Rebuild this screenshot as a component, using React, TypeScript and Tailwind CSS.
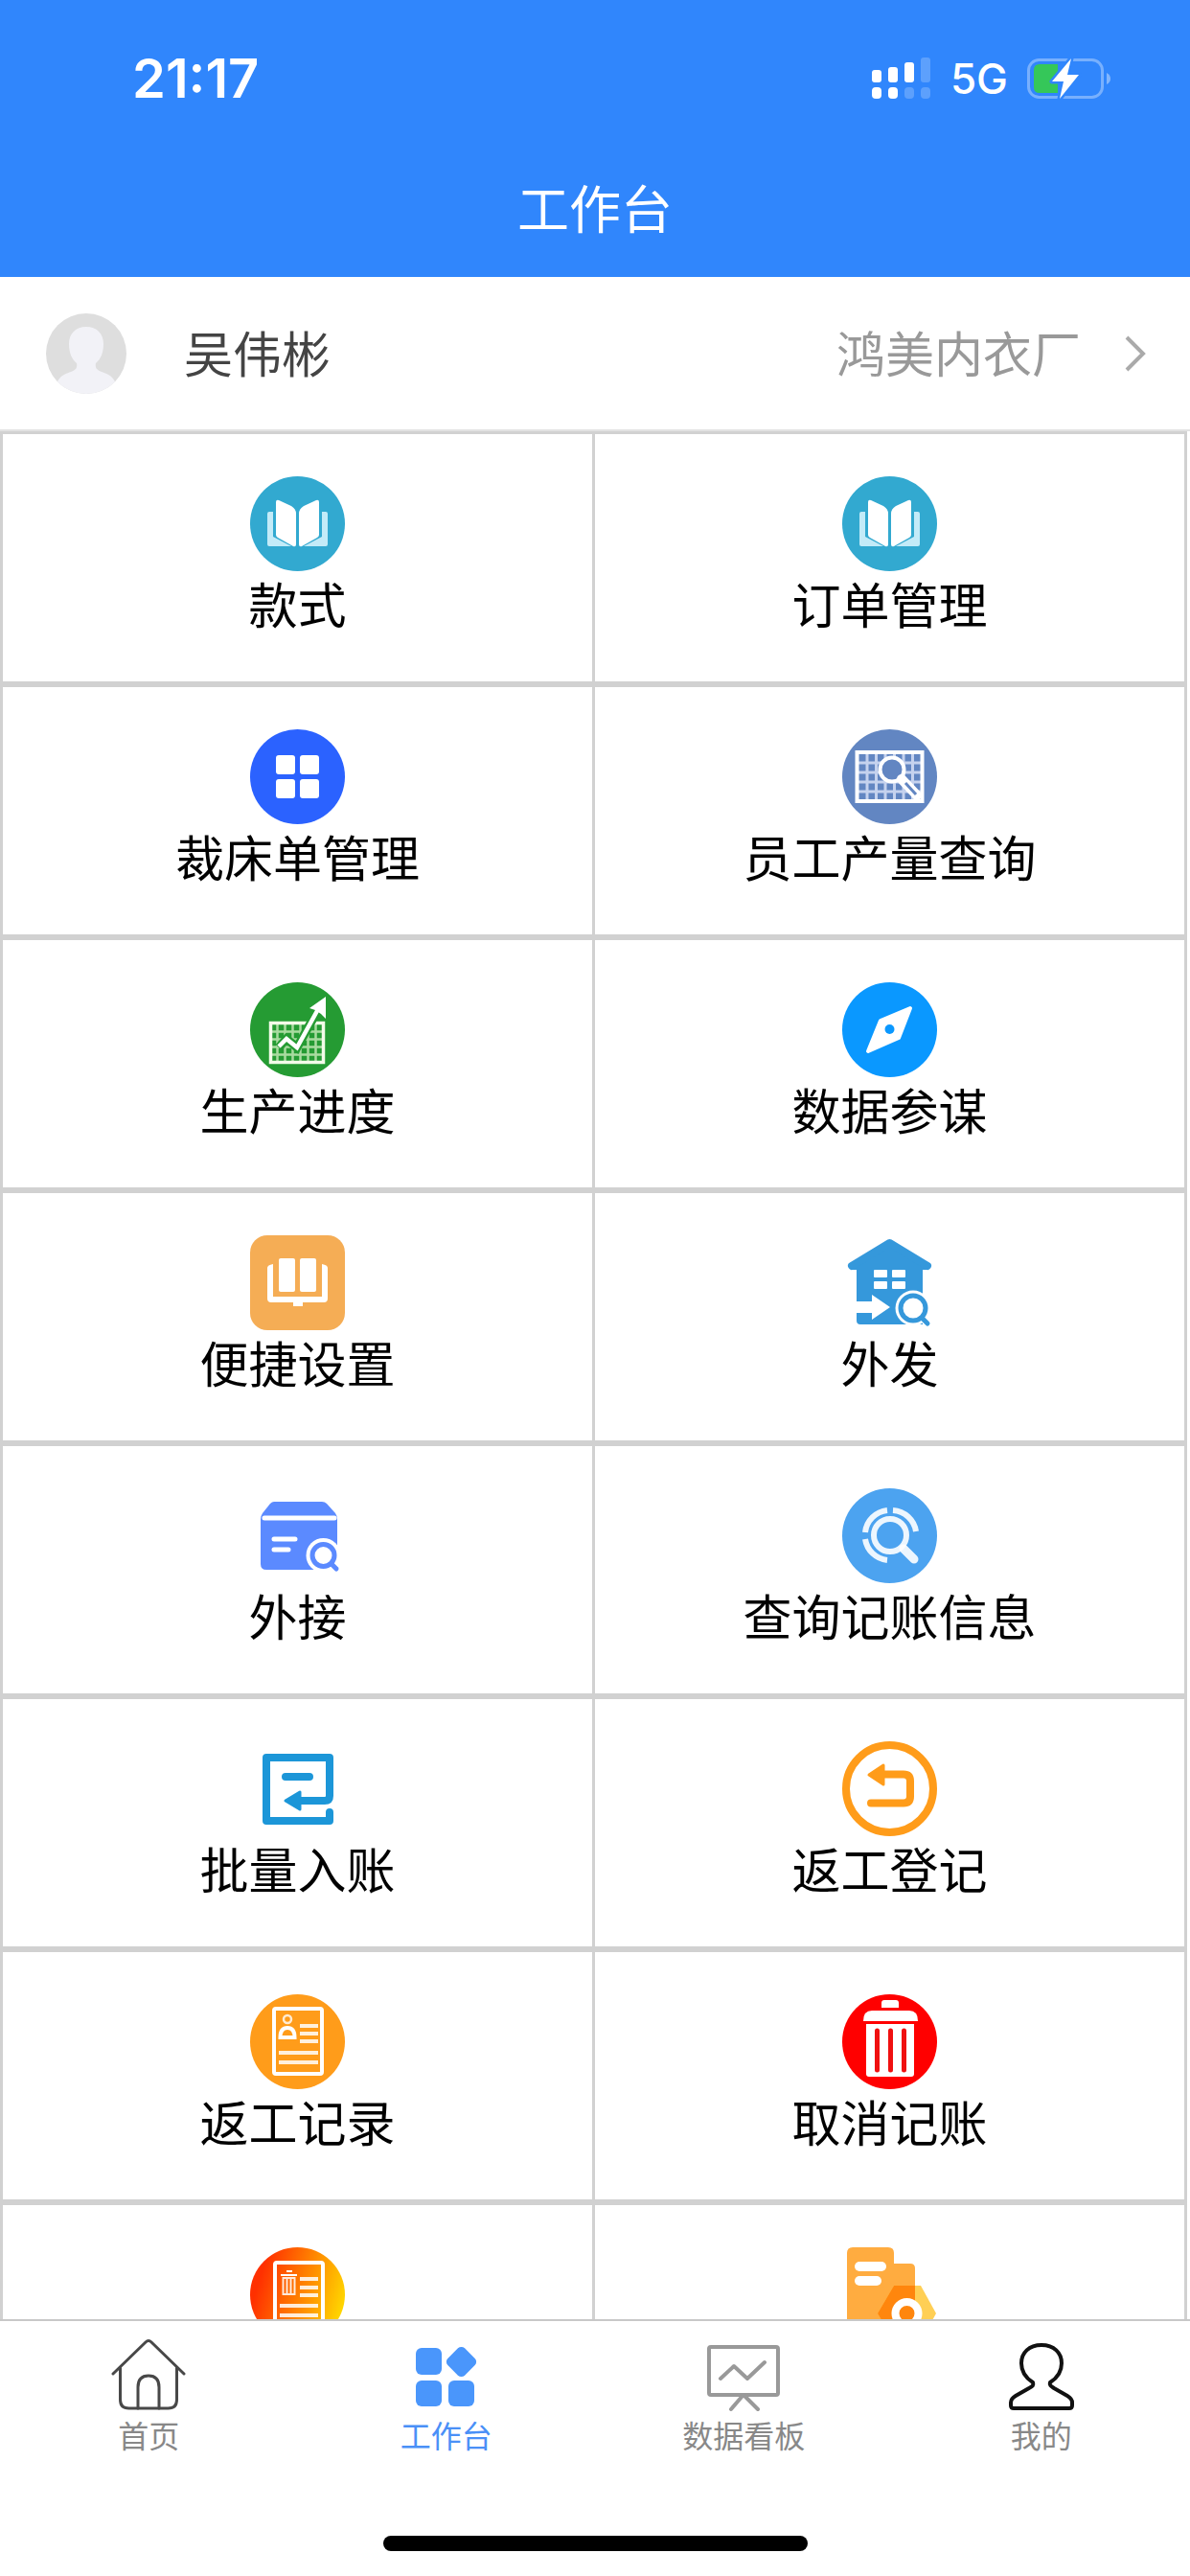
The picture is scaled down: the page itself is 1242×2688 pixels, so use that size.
import { useState, type ReactNode } from 'react'

type MenuItem = {
  name: string
  icon: ReactNode
  hideLabel?: boolean
}

const BookIcon = () => (
  <>
    <circle cx="49.5" cy="49.5" r="49.5" fill="#32a9d0" />
    <path d="M18 39q0-2 2-2h4v26l19 10H20q-2 0-2-2z" fill="#c3ebf8" />
    <path d="M81 39q0-2-2-2h-4v26L56 73h23q2 0 2-2z" fill="#c3ebf8" />
    <path d="M27 27q0-3 3-2l13 6q5 3 5 8v32q0 3-3 2L29 64q-2-1-2-3z" fill="#fff" />
    <path d="M72 27q0-3-3-2l-13 6q-5 3-5 8v32q0 3 3 2l16-9q2-1 2-3z" fill="#fff" />
  </>
)

const BlocksIcon = () => (
  <>
    <circle cx="49.5" cy="49.5" r="49.5" fill="#2b62ff" />
    <g fill="#fff">
      <rect x="27" y="27" width="20" height="20" rx="3" />
      <rect x="52" y="27" width="20" height="20" rx="3" />
      <rect x="27" y="52" width="20" height="20" rx="3" />
      <rect x="52" y="52" width="20" height="20" rx="3" />
    </g>
  </>
)

const OutputSearchIcon = () => (
  <>
    <circle cx="49.5" cy="49.5" r="49.5" fill="#6286c2" />
    <g stroke="#c5d2ee" strokeWidth="3">
      <path d="M26 24v50M35.5 24v50M45 24v50M54.5 24v50M64 24v50M73.5 24v50" />
      <path d="M15 35h68M15 45h68M15 55h68M15 65h68" />
    </g>
    <rect x="15.5" y="24" width="68" height="51" fill="none" stroke="#fff" strokeWidth="4" />
    <circle cx="52" cy="42" r="12.5" fill="#6286c2" stroke="#fff" strokeWidth="4" />
    <path d="M62 52l16 17" stroke="#fff" strokeWidth="10" strokeLinecap="round" />
    <path d="M66 56l11 12" stroke="#6286c2" strokeWidth="3" />
  </>
)

const ProgressIcon = () => (
  <>
    <circle cx="49.5" cy="49.5" r="49.5" fill="#259b33" />
    <g stroke="#a9dba0" strokeWidth="2.5">
      <path d="M28.5 43v40M36.5 43v40M44.5 43v40M52.5 43v40M60.5 43v40M68.5 43v40" />
      <path d="M22 51.5h54M22 59.5h54M22 67.5h54M22 75.5h54" />
    </g>
    <rect x="21.5" y="42.5" width="55" height="41" fill="none" stroke="#f3fbe9" strokeWidth="3.5" />
    <path d="M30 68l8-9 11 9 20-36" fill="none" stroke="#259b33" strokeWidth="9" />
    <path d="M30 67l8-8 11 9 22-40" fill="none" stroke="#fff" strokeWidth="4.5" />
    <path d="M79 15L62 27l6 2 6 4 5 5z" fill="#fff" />
  </>
)

const CompassIcon = () => (
  <>
    <circle cx="49.5" cy="49.5" r="49.5" fill="#0a98ff" />
    <path d="M71 27L40 40 27 72l32-14z" fill="#fff" stroke="#fff" strokeWidth="4" strokeLinejoin="round" />
    <circle cx="49.5" cy="49" r="5" fill="#0a98ff" />
  </>
)

const SettingBookIcon = () => (
  <>
    <rect width="99" height="99" rx="18" fill="#f5ad55" />
    <g fill="#fff">
      <rect x="30" y="24" width="17" height="35" rx="2" />
      <rect x="52" y="24" width="17" height="35" rx="2" />
      <path d="M18 34q0-3 6-4v34h51V30q6 1 6 4v32q0 4-4 4H55v4H45v-4H22q-4 0-4-4z" />
    </g>
  </>
)

const HouseIcon = () => (
  <>
    <path d="M49.5 8L9 36h6v53q0 4 4 4h65V36h6z" fill="#3598db" />
    <path d="M10 32L49.5 8 89 32" fill="none" stroke="#3598db" strokeWidth="8" strokeLinecap="round" strokeLinejoin="round" />
    <g fill="#fff">
      <rect x="33" y="36" width="14" height="8" rx="1" />
      <rect x="52" y="36" width="14" height="8" rx="1" />
      <rect x="33" y="48" width="14" height="8" rx="1" />
      <rect x="52" y="48" width="14" height="8" rx="1" />
      <path d="M14 69h17v-7l19 13-19 13v-7H14z" />
      <path d="M74 76l14 22h14V76z" />
      <circle cx="74" cy="76" r="18.5" />
    </g>
    <circle cx="74" cy="76" r="13" fill="none" stroke="#3598db" strokeWidth="5" />
    <path d="M83 86l6 6" stroke="#3598db" strokeWidth="5" strokeLinecap="round" />
  </>
)

const BoxSearchIcon = () => (
  <>
    <path d="M25 14h50q3 0 5 2l9 10q2 3 2 6v53H17q-6 0-6-6V32q0-3 2-6l8-10q2-2 4-2z" fill="#5b8aff" />
    <path d="M15 31h73M25 53h22M25 64h15" stroke="#fff" strokeLinecap="round" strokeWidth="5" />
    <path d="M76 70l12 20h12V70z" fill="#fff" />
    <circle cx="76.5" cy="70" r="18" fill="#fff" />
    <circle cx="76.5" cy="70" r="11.5" fill="none" stroke="#5b8aff" strokeWidth="5" />
    <path d="M85 79l5 5" stroke="#5b8aff" strokeWidth="5" strokeLinecap="round" />
  </>
)

const QueryIcon = () => (
  <>
    <circle cx="49.5" cy="49.5" r="49.5" fill="#4ca3f0" />
    <g fill="none" stroke="#fff" strokeOpacity=".9">
      <circle cx="50" cy="49" r="17" strokeWidth="6" />
      <path d="M53 23a26 26 0 0 1 24 22M24 46a26 26 0 0 1 23-23M24 53a26 26 0 0 0 23 22" strokeWidth="6" />
      <path d="M64 63l11 11" strokeWidth="9" strokeLinecap="round" />
    </g>
  </>
)

const BatchIcon = () => (
  <>
    <path
      d="M83 74v9H17V17h66v40q0 5-5 5H50M37 37h25"
      fill="none"
      stroke="#1c96d8"
      strokeWidth="8"
      strokeLinecap="round"
      strokeLinejoin="round"
    />
    <path d="M37 62l15-9v18z" fill="#1c96d8" stroke="#1c96d8" strokeWidth="3" strokeLinejoin="round" />
  </>
)

const ReturnIcon = () => (
  <>
    <circle cx="49.5" cy="49.5" r="45.5" fill="none" stroke="#ff9c1a" strokeWidth="8" />
    <path d="M42 34.5h22q7 0 7 7v16q0 7-7 7H30" fill="none" stroke="#ff9c1a" strokeWidth="8" strokeLinecap="round" />
    <path d="M28 35l15-10v20z" fill="#ff9c1a" stroke="#ff9c1a" strokeWidth="3" strokeLinejoin="round" />
  </>
)

const RecordIcon = () => (
  <>
    <circle cx="49.5" cy="49.5" r="49.5" fill="#ff9c1a" />
    <g fill="none" stroke="#fff">
      <rect x="25" y="15" width="50" height="68" rx="2" strokeWidth="4" />
      <circle cx="39" cy="26" r="4" strokeWidth="2.5" strokeOpacity=".8" />
      <path d="M31.5 45q0-10 7.5-10t7.5 10z" strokeWidth="4" />
      <path d="M52 33h19M52 41h19M52 49h19M30 61h41M30 71h41" strokeWidth="4" strokeOpacity=".85" />
    </g>
  </>
)

const TrashIcon = () => (
  <>
    <circle cx="49.5" cy="49.5" r="49.5" fill="#f00" />
    <g fill="#fff">
      <path d="M41 14V9q0-3 3-3h12q3 0 3 3v5z" />
      <path d="M22 28q0-11 9-11h39q9 0 9 11z" />
      <path d="M25 31h50v52q0 3-3 3H28q-3 0-3-3z" />
    </g>
    <path d="M36.5 38v41M50.5 38v41M64.5 38v41" stroke="#f01010" strokeWidth="5" strokeLinecap="round" />
  </>
)

const CancelRecordIcon = () => (
  <>
    <defs>
      <linearGradient id="cancelRecord" x1="0" y1=".3" x2="1" y2=".6">
        <stop offset="0.1" stopColor="#ff3000" />
        <stop offset="0.5" stopColor="#ff7a00" />
        <stop offset="1" stopColor="#ffd800" />
      </linearGradient>
    </defs>
    <circle cx="49.5" cy="49.5" r="49.5" fill="url(#cancelRecord)" />
    <g fill="none" stroke="#fff">
      <rect x="26" y="16" width="50" height="68" rx="2" strokeWidth="4" />
      <path d="M32 29h17M38 25h6" strokeWidth="2" />
      <path d="M34.5 32v17h12V32zM38.5 32v17M42.5 32v17" strokeWidth="2" strokeOpacity=".85" />
      <path d="M52 33h19M52 42h19M52 50h19M31 61h40M31 71h40" strokeWidth="4" strokeOpacity=".85" />
    </g>
  </>
)

const FileSettingIcon = () => (
  <>
    <path d="M54 17h17q5 0 5 5v77H54z" fill="#ffac40" />
    <path d="M11 0h37q6 0 6 6v93H5V6q0-6 6-6z" fill="#ffac40" />
    <path d="M54 40h28l16 29-16 29H54L37 69z" fill="#ffcf55" />
    <path d="M54 40h22v58H54L37 69z" fill="#ff860d" />
    <rect x="13" y="15" width="33" height="10" rx="5" fill="#fff" />
    <rect x="13" y="30" width="28" height="10" rx="5" fill="#fff" />
    <circle cx="67.5" cy="69" r="12" fill="#ff860d" stroke="#fff" strokeWidth="8" />
  </>
)

const menu: MenuItem[] = [
  { name: '款式', icon: <BookIcon /> },
  { name: '订单管理', icon: <BookIcon /> },
  { name: '裁床单管理', icon: <BlocksIcon /> },
  { name: '员工产量查询', icon: <OutputSearchIcon /> },
  { name: '生产进度', icon: <ProgressIcon /> },
  { name: '数据参谋', icon: <CompassIcon /> },
  { name: '便捷设置', icon: <SettingBookIcon /> },
  { name: '外发', icon: <HouseIcon /> },
  { name: '外接', icon: <BoxSearchIcon /> },
  { name: '查询记账信息', icon: <QueryIcon /> },
  { name: '批量入账', icon: <BatchIcon /> },
  { name: '返工登记', icon: <ReturnIcon /> },
  { name: '返工记录', icon: <RecordIcon /> },
  { name: '取消记账', icon: <TrashIcon /> },
  { name: '取消记录', icon: <CancelRecordIcon />, hideLabel: true },
  { name: '设置', icon: <FileSettingIcon />, hideLabel: true },
]

const tabs = [
  {
    name: '首页',
    icon: (
      <g fill="none" stroke="#484848" strokeWidth="3" strokeLinecap="round" strokeLinejoin="round">
        <path d="M3 37L37 4q3-3 6 0l34 33" />
        <path d="M10.5 31v33q0 9 9 9h41q9 0 9-9V31" />
        <path d="M29 73V51q0-12 11-12t11 12v22" />
      </g>
    ),
  },
  {
    name: '工作台',
    icon: (
      <g fill="#4a96fb">
        <rect x="8" y="10" width="27" height="28" rx="6" />
        <rect x="8" y="44" width="27" height="27" rx="6" />
        <rect x="42" y="44" width="27" height="27" rx="6" />
        <rect x="43" y="12" width="25" height="25" rx="5" transform="rotate(45 55.5 24.5)" />
      </g>
    ),
  },
  {
    name: '数据看板',
    icon: (
      <g fill="none" stroke="#999" strokeWidth="4" strokeLinecap="round" strokeLinejoin="round">
        <rect x="4" y="9" width="72" height="50" rx="2" />
        <path d="M16 42l14-13 14 13 18-17M39 60L27 74M41 60l14 14" />
      </g>
    ),
  },
  {
    name: '我的',
    icon: (
      <path
        d="M31 46C23 41 19 35 19 26 19 15 27 7 40 7s21 8 21 19c0 9-4 15-12 20-1 3 1 4 4 6l14 8q5 3 5 7v3q0 3-3 3H11q-3 0-3-3v-3q0-4 5-7l14-8c4-2 5-3 4-6z"
        fill="none"
        stroke="#111"
        strokeWidth="4"
        strokeLinejoin="round"
      />
    ),
  },
]

function StatusBar() {
  return (
    <div className="flex h-[148px] items-center justify-between pt-4 pr-[82px] pl-[138px] font-['Inter',sans-serif] text-white">
      <span className="text-[56px] leading-[66px] font-semibold">21:17</span>
      <div className="flex items-center">
        <svg width="62" height="44" viewBox="0 0 62 44" fill="#fff" aria-hidden="true">
          <rect x="0" y="13" width="10" height="13" rx="3" />
          <rect x="17" y="10" width="10" height="16" rx="3" />
          <rect x="34" y="5" width="10" height="21" rx="3" />
          <rect x="51" y="0" width="10" height="26" rx="3" opacity=".22" />
          <rect x="0" y="31" width="10" height="12" rx="4" />
          <rect x="17" y="31" width="10" height="12" rx="4" />
          <rect x="34" y="31" width="10" height="12" rx="4" opacity=".22" />
          <rect x="51" y="31" width="10" height="12" rx="4" opacity=".22" />
        </svg>
        <span className="ml-5 text-[44px] leading-[66px] font-medium">5G</span>
        <svg className="ml-5" width="88" height="44" viewBox="0 0 88 44" aria-hidden="true">
          <rect x="1.5" y="2.5" width="77" height="39" rx="11" fill="none" stroke="#fff" strokeOpacity=".35" strokeWidth="3" />
          <path d="M83 16q4 2 4 6t-4 6z" fill="#fff" fillOpacity=".4" />
          <path d="M13 7h19v30H13q-6 0-6-6V13q0-6 6-6z" fill="#35c759" />
          <path
            d="M46 1L26 25h12l-4 18 20-25H42z"
            fill="#fff"
            stroke="#3086fc"
            strokeWidth="5"
            strokeLinejoin="round"
            paintOrder="stroke"
          />
        </svg>
      </div>
    </div>
  )
}

function UserRow() {
  return (
    <button
      type="button"
      className="flex h-[161px] w-full shrink-0 items-center border-b-2 border-[#e2e2e2] bg-white pr-[46px] pl-12"
    >
      <svg width="84" height="84" viewBox="0 0 84 84" aria-hidden="true">
        <defs>
          <clipPath id="avatar">
            <circle cx="42" cy="42" r="42" />
          </clipPath>
        </defs>
        <g clipPath="url(#avatar)">
          <rect width="84" height="84" fill="#dedede" />
          <path
            d="M42 14c-11 0-18 7-18 18 0 9 3 16 8 20 1 5-1 7-6 9C17 64 11 67 8 84h68c-3-17-9-20-18-23-5-2-7-4-6-9 5-4 8-11 8-20 0-11-7-18-18-18z"
            fill="#f2f2f7"
          />
        </g>
      </svg>
      <span className="ml-[60px] pb-1 text-[51px] leading-[66px] text-[#444]">吴伟彬</span>
      <span className="ml-auto pb-1 text-[51px] leading-[66px] text-[#999]">鸿美内衣厂</span>
      <svg className="ml-[46px]" width="22" height="38" viewBox="0 0 22 38" fill="none" aria-hidden="true">
        <path d="M2 2l17 17L2 36" stroke="#aaa" strokeWidth="4" />
      </svg>
    </button>
  )
}

export default function App() {
  const [active, setActive] = useState('工作台')

  return (
    <div className="flex h-screen flex-col bg-white font-['Noto_Sans_CJK_SC',sans-serif]">
      <header className="shrink-0 bg-[#3086fc]">
        <StatusBar />
        <h1 className="flex h-[141px] items-center justify-center pb-1.5 text-[54px] text-white">工作台</h1>
      </header>

      <UserRow />

      <main className="min-h-0 flex-1 overflow-y-auto [scrollbar-width:none]">
        <div className="mr-[3px] grid grid-cols-2 gap-x-[3px] gap-y-1.5 bg-[#d1d1d1] p-[3px]">
          {menu.map((item) => (
            <button
              key={item.name}
              type="button"
              aria-label={item.hideLabel ? item.name : undefined}
              className="flex h-[258px] flex-col items-center bg-white pt-11"
            >
              <svg width="99" height="99" viewBox="0 0 99 99" aria-hidden="true">
                {item.icon}
              </svg>
              {!item.hideLabel && <span className="text-[51px] leading-[66px] text-black">{item.name}</span>}
            </button>
          ))}
        </div>
      </main>

      <footer className="shrink-0 border-t-2 border-[#c8c8c8] bg-white">
        <nav className="grid grid-cols-4 pt-[18px]">
          {tabs.map((tab) => (
            <button
              key={tab.name}
              type="button"
              onClick={() => setActive(tab.name)}
              className={`flex flex-col items-center text-[32px] leading-[40px] ${active === tab.name ? 'text-[#4a90f7]' : 'text-[#888]'}`}
            >
              <svg width="80" height="80" viewBox="0 0 80 80" aria-hidden="true">
                {tab.icon}
              </svg>
              {tab.name}
            </button>
          ))}
        </nav>
        {/* home indicator */}
        <div className="mx-auto mt-[86px] mb-[26px] h-4 w-[443px] rounded-full bg-black" />
      </footer>
    </div>
  )
}
